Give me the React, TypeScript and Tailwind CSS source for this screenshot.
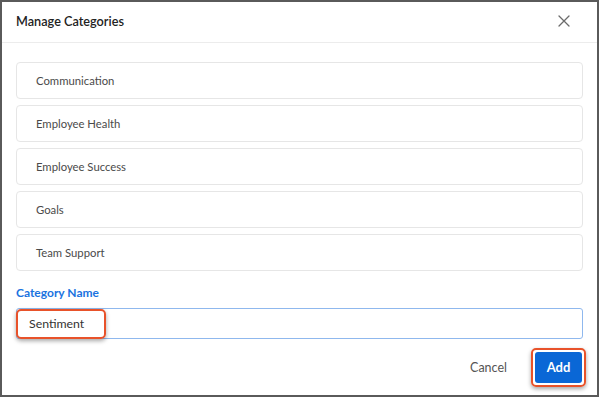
import React, { useState } from 'react';

const categories = ['Communication', 'Employee Health', 'Employee Success', 'Goals', 'Team Support'];

const App: React.FC = () => {
  const [name, setName] = useState('Sentiment');

  return (
    <div className="w-[599px] h-[397px] bg-white border-2 border-[#5a5a5a] flex flex-col font-['Lato',sans-serif] text-[#404040] overflow-hidden">
      {/* Header */}
      <div className="h-[41px] shrink-0 flex items-center justify-between pl-[14px] pr-[27px] border-b border-[#ececec]">
        <h2 className="text-[12.7px] font-semibold text-[#222]">Manage Categories</h2>
        <button className="text-[#6b6b6b] -mt-[2px]">
          <svg width="12" height="12" viewBox="0 0 12 12" fill="none" stroke="currentColor" strokeWidth="1.3" strokeLinecap="round">
            <path d="M1 1l10 10M11 1L1 11" />
          </svg>
        </button>
      </div>

      {/* List */}
      <div className="flex flex-col gap-[6px] pt-[19px] pl-[14px] pr-[14px]">
        {categories.map(c => (
          <div key={c} className="h-[37px] flex items-center pt-[2px] px-[19px] border border-[#e6e6e6] rounded-[4px] text-[11.3px] text-[#4a4a4a]">
            {c}
          </div>
        ))}
      </div>

      {/* Form */}
      <div className="pl-[14px] pr-[14px] pt-[14px]">
        <label className="block text-[12px] font-bold text-[#1a73e0] leading-[16px]">Category Name</label>
        <div className="relative mt-[7px]">
          <input
            value={name}
            onChange={e => setName(e.target.value)}
            className="w-full h-[31px] border border-[#8fb8ee] rounded-[3px] pl-[12px] text-[12.3px] text-[#333] outline-none"
          />
          <div className="absolute left-0 top-[1px] w-[90px] h-[30px] border-2 border-[#e8522a] rounded-[5px] shadow-[0_2px_4px_rgba(0,0,0,0.35)] pointer-events-none" />
        </div>
      </div>

      {/* Actions */}
      <div className="flex items-center justify-end gap-[24px] pr-[14px] pt-[9px]">
        <button className="text-[12.5px] text-[#555] pt-[2px]">Cancel</button>
        <div className="p-[2px] border-2 border-[#e8522a] rounded-[5px] shadow-[0_2px_4px_rgba(0,0,0,0.35)] -mr-[3px]">
          <button className="w-[47px] h-[31px] bg-[#0a67d6] rounded-[3px] text-white text-[13px] font-bold pt-[1px]">Add</button>
        </div>
      </div>
    </div>
  );
};

export default App;
